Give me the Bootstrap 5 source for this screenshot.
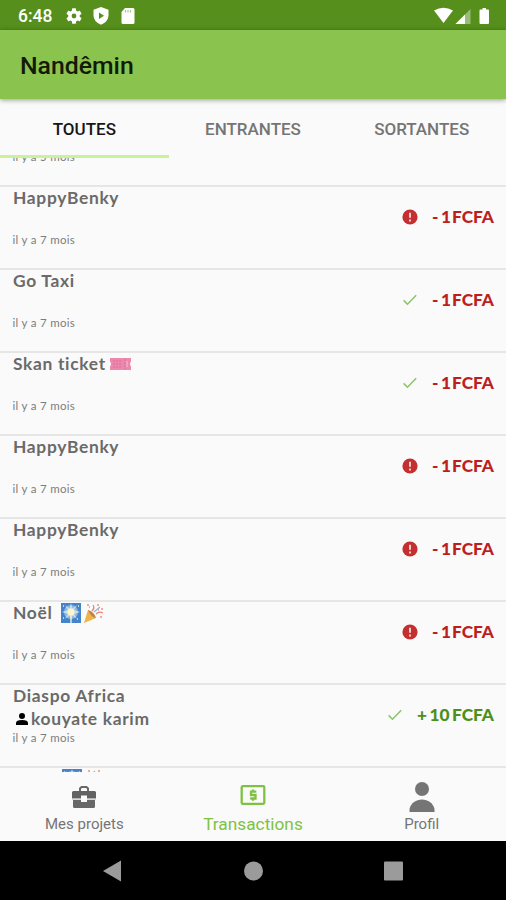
<!DOCTYPE html>
<html lang="fr">
<head>
<meta charset="utf-8">
<meta name="viewport" content="width=device-width, initial-scale=1">
<title>Nandêmin</title>
<link href="https://cdn.jsdelivr.net/npm/bootstrap@5.3.0/dist/css/bootstrap.min.css" rel="stylesheet">
<style>
body{height:900px;background:#fafafa;font-family:Roboto,sans-serif;color:#6d6d6d}
svg{display:block;flex:none}
.status{height:30px;background:#568f1b;color:#fff;font-size:17.5px;font-weight:500;padding:2px 15px 0 18px}
.appbar{height:69px;background:#8bc34f;color:#121a08;font-size:24.8px;font-weight:500;padding:3px 20px 0;box-shadow:0 1px 5px rgba(0,0,0,.4);z-index:3}
.tabs{height:59px;background:#fafafa;z-index:2;font-size:17px}
.tabs .nav-link{color:#757575;padding:0;height:59px;line-height:60px;border-radius:0;border-bottom:3px solid transparent;font-weight:500}
.tabs .nav-link.active{color:#161616;border-color:#c9f29b}
.feed{height:614px}
.entry{height:83px;border-bottom:2px solid #e6e6e6;padding:0 12px 0 13px;font-family:Lato,sans-serif}
.entry.first{height:29px}
.entry.first .when{margin-top:-9px}
.who{font-weight:700;font-size:17.4px;line-height:22.5px;height:22.5px;letter-spacing:.68px;color:#6a6a6a}
.when{font-size:11.5px;line-height:15px;color:#7d7d7d;letter-spacing:.3px;margin-top:-.5px;margin-left:-.5px}
.amount{font-weight:900;font-size:17.3px;line-height:22px;margin-top:19px;color:#bd1f1f;gap:14px}
.amount .sign{margin-right:2.5px}
.amount .cur{margin-left:1px}
.amount.plus{color:#4c9018}
.amount.plus .cur{margin-left:2.5px}
.dock{height:69px;background:#fafafa;font-size:15px}
.dock a{color:#757575;text-decoration:none}
.dock a.on{color:#7fc243;font-size:17.3px}
.dock .glyph{height:42px}
.dock .cap{line-height:20px}
.keys{height:59px;background:#000}
</style>
<script src="https://cdn.jsdelivr.net/npm/bootstrap@5.3.0/dist/js/bootstrap.bundle.min.js"></script>
</head>
<body class="overflow-hidden d-flex flex-column">
<svg width="0" height="0" class="position-absolute">
<symbol id="alert" viewBox="0 0 16 16"><circle cx="8" cy="8" r="7.6" fill="#c4302f"/><path d="M8 3.700v5M8 10.400v2" stroke="#f6d2d2" stroke-width="1.900"/></symbol>
<symbol id="check" viewBox="0 0 16 16"><path d="M1.600 8.400 5.500 12.200 14.200 3.200" fill="none" stroke="#8bc56a" stroke-width="1.600"/></symbol>
<symbol id="sparkler" viewBox="0 0 20 20"><path fill="#4584cb" d="M0 0h20v20H0z"/><circle cx="10" cy="9" r="7" fill="#8bb9e4"/><path d="m10 0 1.400 5.400 4.500-3.200-2.800 4.700 5.900 2.100-5.900 2 2.800 4.800-4.500-3.200L10 18l-1.400-5.400-4.500 3.200L6.900 11 1 9l5.900-2.100-2.800-4.700 4.500 3.200z" fill="#c9dcec"/><circle cx="10" cy="9" r="3.500" fill="#fff5c7"/><path d="M10 12v8M2 3h1m14 0h1M2 15h1m13 1h1" stroke="#e8ecd8" stroke-width="1.400"/></symbol>
<symbol id="popper" viewBox="0 0 20 20"><path d="M0 20 4 7q6 2 8 8z" fill="#eeb447"/><path d="M4 7q6 2 8 8-5-1-8-8z" fill="#b9824e"/><path d="M8 8q3-3 1-6M12 11q3-3 7-1" fill="none" stroke="#ef8372" stroke-width="1.300"/><path d="m10 9 6-5" stroke="#84b5dc" stroke-width="1.200"/><path d="M3 2h2m8 0h2m2 4h2m-3 8h2M5 4h1m8 3h1" stroke="#ec927b" stroke-width="1.600"/></symbol>
</svg>
<header class="status d-flex align-items-center justify-content-between">
<div class="d-flex align-items-center">
<span>6:48</span>
<svg style="margin-left:14px" width="16" height="16" viewBox="2 2 20 20" fill="#fff"><path fill-rule="evenodd" d="M19.140 12.940a7 7 0 0 0 0-1.880l2.030-1.580a.5.5 0 0 0 .120-.610l-1.920-3.320a.5.5 0 0 0-.590-.220l-2.390.960a7 7 0 0 0-1.620-.940L14.400 2.810A.5.500 0 0 0 13.920 2.400h-3.840a.5.500 0 0 0-.470.410L9.250 5.350a7 7 0 0 0-1.620.940L5.240 5.330a.5.500 0 0 0-.590.220L2.740 8.870a.5.500 0 0 0 .120.610l2.030 1.580a7 7 0 0 0 0 1.880l-2.030 1.580a.5.500 0 0 0-.120.610l1.920 3.320a.5.500 0 0 0 .590.220l2.390-.960a7 7 0 0 0 1.620.940l.360 2.540a.5.500 0 0 0 .480.410h3.840a.5.500 0 0 0 .470-.410l.360-2.540a7 7 0 0 0 1.620-.940l2.390.960a.5.500 0 0 0 .590-.220l1.920-3.320a.5.500 0 0 0-.120-.610zM12 15a3 3 0 1 1 0-6 3 3 0 0 1 0 6z"/></svg>
<svg style="margin-left:9px" width="20" height="18" viewBox="0 0 20 18"><path d="m10 0 7.500 2.800v5.700q0 6-7.500 9.300Q2.500 14.500 2.500 8.500V2.800z" fill="#fff"/><path d="M8 5.500v6.500L13 8.700z" fill="#568f1b"/></svg>
<svg style="margin-left:6px" width="20" height="16" viewBox="0 0 20 16"><path d="M8 0h8q1.500 0 1.500 1.500v13Q17.500 16 16 16H6q-1.500 0-1.500-1.500V4z" fill="#fff"/><path d="M8.500 2v2.500m2.500-2.500v2.500m2.500-2.500v2.500" stroke="#a9c78c" stroke-width="1.200"/></svg>
</div>
<svg width="58" height="18" viewBox="0 0 58 18" fill="#fff"><path d="M1 3.500q9.500-5.500 19 0L10.500 16z"/><path d="M37.500 2v15h-15z" opacity=".4"/><path d="M32 7.500V17h-9.500z"/><path d="M49.500 1h3.500v1.500h2q1 0 1 1V16q0 1-1 1h-7.500q-1 0-1-1V3.500q0-1 1-1h2z"/></svg>
</header>
<div class="appbar d-flex align-items-center position-relative">Nandêmin</div>
<nav class="tabs nav nav-fill nav-justified position-relative">
<a class="nav-link active" href="#">TOUTES</a><a class="nav-link" href="#">ENTRANTES</a><a class="nav-link" href="#">SORTANTES</a>
</nav>
<main class="feed overflow-hidden">
<div class="entry first d-flex align-items-start"><div class="when">il y a 5 mois</div></div>
<div class="entry d-flex justify-content-between"><div><div class="who">HappyBenky</div><div class="who"></div><div class="when">il y a 7 mois</div></div><div class="amount d-flex align-items-center align-self-start"><svg width="16" height="16"><use href="#alert"/></svg><div><span class="sign">-</span>1<span class="cur">FCFA</span></div></div></div>
<div class="entry d-flex justify-content-between"><div><div class="who">Go Taxi</div><div class="who"></div><div class="when">il y a 7 mois</div></div><div class="amount d-flex align-items-center align-self-start"><svg width="16" height="16"><use href="#check"/></svg><div><span class="sign">-</span>1<span class="cur">FCFA</span></div></div></div>
<div class="entry d-flex justify-content-between"><div><div class="who d-flex align-items-center">Skan ticket<svg style="margin-left:4px" width="21" height="12" viewBox="0 0 21 12"><path d="M0 0h21v3.500q-2 2.500 0 5V12H0V8.500q2-2.500 0-5z" fill="#ec87ad"/><path d="M3 3h9M3 6h9M3 9h9M15 1v10" stroke="#d86f9b" stroke-dasharray="2 1"/><path d="M17 3v6" stroke="#f7bfd3"/></svg></div><div class="who"></div><div class="when">il y a 7 mois</div></div><div class="amount d-flex align-items-center align-self-start"><svg width="16" height="16"><use href="#check"/></svg><div><span class="sign">-</span>1<span class="cur">FCFA</span></div></div></div>
<div class="entry d-flex justify-content-between"><div><div class="who">HappyBenky</div><div class="who"></div><div class="when">il y a 7 mois</div></div><div class="amount d-flex align-items-center align-self-start"><svg width="16" height="16"><use href="#alert"/></svg><div><span class="sign">-</span>1<span class="cur">FCFA</span></div></div></div>
<div class="entry d-flex justify-content-between"><div><div class="who">HappyBenky</div><div class="who"></div><div class="when">il y a 7 mois</div></div><div class="amount d-flex align-items-center align-self-start"><svg width="16" height="16"><use href="#alert"/></svg><div><span class="sign">-</span>1<span class="cur">FCFA</span></div></div></div>
<div class="entry d-flex justify-content-between"><div><div class="who d-flex align-items-center">Noël<svg style="margin-left:9px" width="20" height="20"><use href="#sparkler"/></svg><svg style="margin-left:3px" width="20" height="20"><use href="#popper"/></svg></div><div class="who"></div><div class="when">il y a 7 mois</div></div><div class="amount d-flex align-items-center align-self-start"><svg width="16" height="16"><use href="#alert"/></svg><div><span class="sign">-</span>1<span class="cur">FCFA</span></div></div></div>
<div class="entry d-flex justify-content-between"><div><div class="who">Diaspo Africa</div><div class="who d-flex align-items-center"><svg style="margin:0 3px 0 3px" width="12" height="12" viewBox="0 0 12 12"><circle cx="6" cy="3" r="3"/><path d="M0 12v-2q0-3 6-3t6 3v2z"/></svg>kouyate karim</div><div class="when">il y a 7 mois</div></div><div class="amount plus d-flex align-items-center align-self-start"><svg width="16" height="16"><use href="#check"/></svg><div><span class="sign">+</span>10<span class="cur">FCFA</span></div></div></div>
<div class="entry"><div class="who d-flex align-items-center"><svg style="margin-left:49px" width="20" height="20"><use href="#sparkler"/></svg><svg style="margin-left:3px" width="20" height="20"><use href="#popper"/></svg></div></div>
</main>
<nav class="dock row g-0 text-center">
<a class="col" href="#"><div class="glyph d-flex align-items-center justify-content-center"><svg style="margin-top:8px" width="26" height="24" viewBox="0 0 26 24"><path d="M9 6V3.500L10.500 2h5L17 3.500V6" fill="none" stroke="#686868" stroke-width="2"/><path d="M2.500 6h21q1.500 0 1.500 1.500V13h-9v-2.500h-6V13H1V7.500Q1 6 2.500 6z" fill="#626262"/><path d="M1 13h9v1.500H1zm15 0h9v1.500h-9z" fill="#b5b5b5"/><path d="M2 15h8v2h6v-2h8v6.500q0 1.500-1.500 1.500h-19Q2 23 2 21.500z" fill="#686868"/></svg></div><div class="cap">Mes projets</div></a>
<a class="col on" href="#"><div class="glyph d-flex align-items-center justify-content-center"><svg style="margin-top:3px" width="26" height="20" viewBox="0 0 26 20" fill="none" stroke="#7fc243" stroke-width="2.300"><rect x="1.700" y="1.200" width="22.600" height="17.600" rx="1"/><path d="M16.300 6.700H11V10h4.500v3.500h-5.300M13 4.500v2.200m0 6.800v2.200"/></svg></div><div class="cap">Transactions</div></a>
<a class="col" href="#"><div class="glyph d-flex align-items-center justify-content-center"><svg style="margin-top:7px" width="26" height="30" viewBox="0 0 26 30" fill="#757575"><circle cx="13" cy="7" r="7"/><path d="M.5 30v-3C2 21 7 17.500 13 17.500S24 21 25.500 27v3z"/></svg></div><div class="cap">Profil</div></a>
</nav>
<footer class="keys">
<svg width="506" height="59" viewBox="0 0 506 59" fill="#9b9b9b"><path d="m103 30 18-10.500v21z"/><circle cx="253.500" cy="30" r="9.500"/><rect x="384" y="20.500" width="19" height="19" rx="1"/></svg>
</footer>
</body>
</html>
